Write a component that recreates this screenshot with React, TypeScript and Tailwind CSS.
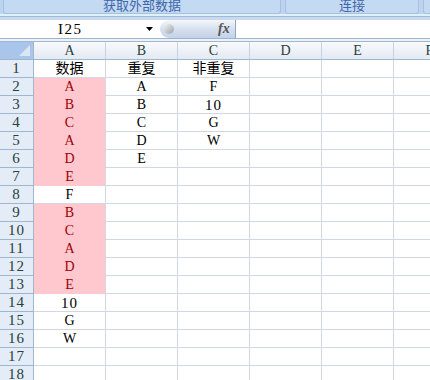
import React from "react";

const cols = ["A", "B", "C", "D", "E", "F"];

type Cell = { t: string; pink?: boolean };

const data: Cell[][] = [
  [{ t: "数据" }, { t: "重复" }, { t: "非重复" }],
  [{ t: "A", pink: true }, { t: "A" }, { t: "F" }],
  [{ t: "B", pink: true }, { t: "B" }, { t: "10" }],
  [{ t: "C", pink: true }, { t: "C" }, { t: "G" }],
  [{ t: "A", pink: true }, { t: "D" }, { t: "W" }],
  [{ t: "D", pink: true }, { t: "E" }, { t: "" }],
  [{ t: "E", pink: true }, { t: "" }, { t: "" }],
  [{ t: "F" }, { t: "" }, { t: "" }],
  [{ t: "B", pink: true }, { t: "" }, { t: "" }],
  [{ t: "C", pink: true }, { t: "" }, { t: "" }],
  [{ t: "A", pink: true }, { t: "" }, { t: "" }],
  [{ t: "D", pink: true }, { t: "" }, { t: "" }],
  [{ t: "E", pink: true }, { t: "" }, { t: "" }],
  [{ t: "10" }, { t: "" }, { t: "" }],
  [{ t: "G" }, { t: "" }, { t: "" }],
  [{ t: "W" }, { t: "" }, { t: "" }],
  [{ t: "" }, { t: "" }, { t: "" }],
  [{ t: "" }, { t: "" }, { t: "" }],
];

const font = {
  fontFamily: '"Liberation Serif", "Noto Sans CJK SC", serif',
};

function isCjk(s: string) {
  return /[\u4e00-\u9fff]/.test(s);
}

function isNum(s: string) {
  return /^[0-9]+$/.test(s);
}

export default function App() {
  return (
    <div className="w-[430px] h-[380px] overflow-hidden bg-white relative" style={font}>
      {/* Ribbon bottom */}
      <div className="h-[14px] bg-[#bcd4ef] flex gap-[4px] px-[3px] overflow-hidden">
        <div className="w-[278px] shrink-0 h-[14px] bg-[#c4d9f2] border border-t-0 border-[#a7c0e2] rounded-b-[3px] flex items-end justify-center overflow-hidden">
          <span
            className="text-[13px] leading-[13px] text-[#3d67aa] mb-[2px]"
            style={{ fontFamily: '"Noto Sans CJK SC", sans-serif' }}
          >
            获取外部数据
          </span>
        </div>
        <div className="w-[134px] shrink-0 h-[14px] bg-[#c4d9f2] border border-t-0 border-[#a7c0e2] rounded-b-[3px] flex items-end justify-center overflow-hidden">
          <span
            className="text-[13px] leading-[13px] text-[#3d67aa] mb-[2px]"
            style={{ fontFamily: '"Noto Sans CJK SC", sans-serif' }}
          >
            连接
          </span>
        </div>
        <div className="w-[20px] shrink-0 h-[14px] bg-[#c4d9f2] border border-t-0 border-[#a7c0e2] rounded-b-[3px]" />
      </div>
      <div className="h-[2px] bg-[#def0fa]" />
      <div className="h-[1px] bg-[#9fb9dc]" />
      <div className="h-[3px] bg-[#c9d9ee]" />

      {/* Formula bar */}
      <div className="h-[19px] flex bg-white border-b border-[#9db3d0]">
        <div className="w-[160px] shrink-0 relative flex items-center">
          <span className="absolute left-[58px] top-[1px] text-[15px] leading-[17px] tracking-[1.5px] text-black">I25</span>
          <svg className="absolute left-[146px] top-[7px]" width="8" height="5" viewBox="0 0 8 5">
            <path d="M0 0 H7 L3.5 4 Z" fill="#000" />
          </svg>
        </div>
        <div className="w-[76px] shrink-0 h-[18px] rounded-l-[9px] border-r border-[#8ea6c6] bg-gradient-to-b from-[#f4f7fb] via-[#d6e0ee] to-[#c4d2e6] relative">
          <div className="absolute left-[4px] top-[4px] w-[10px] h-[10px] rounded-full bg-gradient-to-br from-[#f2f2f2] to-[#9aa3ad]" />
          <span
            className="absolute left-[58px] top-[0px] text-[14px] leading-[17px] italic text-[#555] font-bold"
            style={{ fontFamily: '"Liberation Serif", serif' }}
          >
            fx
          </span>
        </div>
        <div className="flex-1" />
      </div>
      <div className="h-[2px] bg-[#eef2f8]" />
      <div className="h-[1px] bg-[#9eb6ce]" />

      {/* Grid header */}
      <div className="flex h-[18px] border-b border-[#9eb6ce]">
        <div className="w-[34px] shrink-0 bg-[#a9c5ec] border-r border-[#9eb6ce] relative">
          <svg className="absolute right-[3px] bottom-[3px]" width="11" height="11" viewBox="0 0 11 11">
            <path d="M11 0 V11 H0 Z" fill="#dbe6f5" />
          </svg>
        </div>
        {cols.map((c) => (
          <div
            key={c}
            className="w-[72px] shrink-0 bg-gradient-to-b from-[#f8fafc] to-[#e4eaf3] border-r border-[#c5d2e3] flex items-center justify-center text-[14px] text-[#27413e]"
          >
            {c}
          </div>
        ))}
      </div>

      {/* Rows */}
      {data.map((row, i) => (
        <div key={i} className="flex h-[18px]">
          <div className="w-[34px] shrink-0 bg-[#e4ecf7] border-r border-b border-[#9eb6ce] flex items-center justify-center text-[15px] tracking-[1px] text-[#27413e]">
            {i + 1}
          </div>
          {cols.map((c, j) => {
            const cell = row[j];
            const pink = cell?.pink;
            const text = cell?.t ?? "";
            return (
              <div
                key={c}
                className={
                  pink
                    ? "w-[72px] shrink-0 bg-[#ffc7ce] border-r border-b border-r-[#d0d7e5] border-b-[#ffc7ce] flex items-center justify-center text-[14px] text-[#9c0006]"
                    : "w-[72px] shrink-0 bg-white border-r border-b border-[#d0d7e5] flex items-center justify-center text-[14px] text-black"
                }
              >
                <span
                  className={
                    isCjk(text)
                      ? "text-[14px] leading-[16px]"
                      : isNum(text)
                      ? "text-[15px] leading-[16px] tracking-[1px]"
                      : "leading-[16px]"
                  }
                >
                  {text}
                </span>
              </div>
            );
          })}
        </div>
      ))}
    </div>
  );
}
